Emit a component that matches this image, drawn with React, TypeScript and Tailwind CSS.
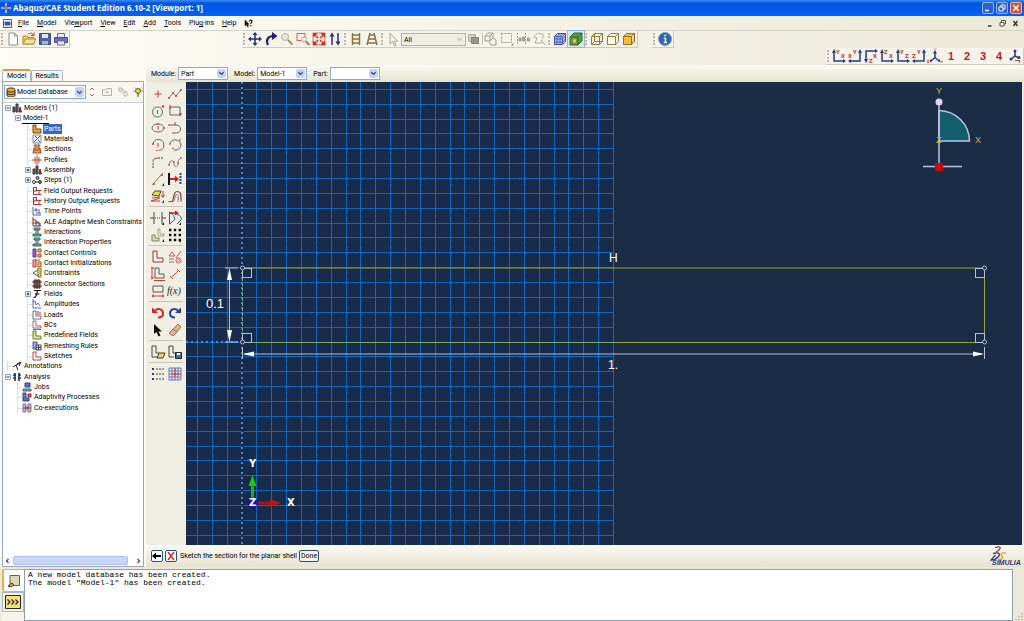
import { clsx } from "clsx";
import type { ReactNode } from "react";

const NAVY = "#27307a";
const RED = "#c4302b";

interface IconProps {
  children: ReactNode;
  box?: number;
  className?: string;
}

function Icon({ children, box = 16, className = "size-4" }: IconProps) {
  return (
    <svg
      viewBox={`0 0 ${box} ${box}`}
      className={clsx("shrink-0", className)}
      fill="none"
      stroke="#333"
      aria-hidden="true"
    >
      {children}
    </svg>
  );
}

interface ToolProps {
  label: string;
  children: ReactNode;
  active?: boolean;
}

function Tool({ label, children, active }: ToolProps) {
  return (
    <button
      type="button"
      aria-label={label}
      title={label}
      className={clsx(
        "flex h-4 w-4 items-center justify-center",
        active && "bg-[#dfe6ee] outline outline-[#9db4cf]",
      )}
    >
      <Icon>{children}</Icon>
    </button>
  );
}

function Handle() {
  return (
    <span className="mx-px h-3 w-[3px] border-l-2 border-dotted border-[#bdb9a6]" />
  );
}

function Bar({ children }: { children: ReactNode }) {
  return (
    <div className="flex h-[17px] items-center border-r border-b border-[#cfccbc] bg-[#f5f3ea]">
      {children}
    </div>
  );
}

function Chevron({ disabled }: { disabled?: boolean }) {
  return (
    <span
      className={clsx(
        "pointer-events-none flex h-full w-[9px] shrink-0 items-center justify-center",
        !disabled && "rounded-xs bg-[#c3d3fb]",
      )}
    >
      <Icon box={8} className="size-[7px]">
        <path
          d="M1.5 2.5 4 5l2.500-2.500"
          stroke={disabled ? "#c4c2b6" : "#3a4f80"}
          strokeWidth="1.600"
        />
      </Icon>
    </span>
  );
}

interface ComboProps {
  id: string;
  label: string;
  value: string;
  className: string;
}

function Combo({ id, label, value, className }: ComboProps) {
  return (
    <div className="flex items-center gap-[2px]">
      <label htmlFor={id}>{label}</label>
      <div
        className={clsx(
          "flex h-[13px] items-center border border-[#8fa8c6] bg-white p-px",
          className,
        )}
      >
        <select id={id} className="h-full min-w-0 flex-1 appearance-none pl-px">
          <option>{value}</option>
        </select>
        <Chevron />
      </div>
    </div>
  );
}

/* ---------- title and menus ---------- */

function TitleBar() {
  return (
    <header className="flex h-4 items-center bg-linear-to-b from-[#3a8cf8] via-[#0054e0] via-20% to-[#0062fb] pr-[2px] pl-px text-white">
      <Icon box={10} className="size-[10px]">
        <path d="M5 0v10M0 5h10" stroke="#f0d8dc" strokeWidth="1.500" />
        <path d="M5 2.500v5M2.500 5h5" stroke="#d04048" />
      </Icon>
      <h1 className="ml-[2px] font-['Open_Sans',sans-serif] text-[8px] font-bold">
        Abaqus/CAE Student Edition 6.10-2 [Viewport: 1]
      </h1>
      <div className="ml-auto flex gap-[2px]">
        <button
          type="button"
          aria-label="Minimize"
          className="size-3 rounded-xs border border-[#9cb8f2] bg-[#2c5fdc]"
        >
          <Icon box={10} className="size-[10px]">
            <path d="M2 7.500h4" stroke="#fff" strokeWidth="1.500" />
          </Icon>
        </button>
        <button
          type="button"
          aria-label="Restore"
          className="size-3 rounded-xs border border-[#9cb8f2] bg-[#2c5fdc]"
        >
          <Icon box={10} className="size-[10px]">
            <path d="M4 4V2h4v4H6M2 4h4v4H2z" stroke="#fff" />
          </Icon>
        </button>
        <button
          type="button"
          aria-label="Close"
          className="size-3 rounded-xs border border-[#f0b8a8] bg-[#dd4a25]"
        >
          <Icon box={10} className="size-[10px]">
            <path d="m2 2 6 6M8 2 2 8" stroke="#fff" strokeWidth="1.600" />
          </Icon>
        </button>
      </div>
    </header>
  );
}

// [before, mnemonic, after]
const MENUS = [
  ["", "F", "ile"],
  ["", "M", "odel"],
  ["Vie", "w", "port"],
  ["", "V", "iew"],
  ["", "E", "dit"],
  ["", "A", "dd"],
  ["", "T", "ools"],
  ["Plu", "g", "-ins"],
  ["", "H", "elp"],
];

function MenuBar() {
  return (
    <nav className="flex h-[15px] items-center border-b border-[#d5d2c2] bg-linear-to-r from-[#fdfcf6] to-[#ece9d8] pr-1 pl-[3px]">
      <Icon box={9} className="mr-[6px] size-[9px]">
        <path d="M.5.5h8v8h-8z" fill="#fff" stroke="#2a57c8" />
        <path d="M2 3h5v3H2z" fill="#2a57c8" stroke="#2a57c8" />
      </Icon>
      <div className="flex items-center gap-2">
        {MENUS.map(([before, key, after]) => (
          <button type="button" key={before + key + after}>
            {before}
            <span className="underline">{key}</span>
            {after}
          </button>
        ))}
        <button type="button" aria-label="Context help">
          <Icon box={9} className="size-[9px]">
            <path d="M1 1v6l1.500-1.500L3.500 8l1-.5-1-2.200H5z" fill="#111" stroke="#111" strokeWidth=".5" />
            <path d="M5.500 2.500C5.500.5 8.300.8 8 2.500 7.800 3.500 6.800 3.500 6.800 5M6.800 6v1.200" stroke="#111" strokeWidth="1.200" />
          </Icon>
        </button>
      </div>
      <div className="ml-auto flex gap-1">
        <button type="button" aria-label="Minimize viewport">
          <Icon box={9} className="size-[9px]">
            <path d="M3 7h3.500" strokeWidth="1.400" />
          </Icon>
        </button>
        <button type="button" aria-label="Restore viewport">
          <Icon box={9} className="size-[9px]">
            <path d="M3.500 3.500v-2h4v3.500h-1.500M2 3.500h4v3.500H2z" stroke="#555" />
          </Icon>
        </button>
        <button type="button" aria-label="Close viewport">
          <Icon box={9} className="size-[9px]">
            <path d="m2.500 2 4 5M6.500 2l-4 5" strokeWidth="1.400" />
          </Icon>
        </button>
      </div>
    </nav>
  );
}

/* ---------- toolbars ---------- */

function Cube({ fill, line, hidden }: { fill: string; line: string; hidden?: boolean }) {
  return (
    <g stroke={line} fill={fill} strokeLinejoin="round">
      <path d="M2.500 5.500h8v8h-8zM2.500 5.500l3-3h8l-3 3M10.500 13.500l3-3v-8" />
      {hidden && <path d="M5.500 2.500v8h8M5.500 10.500l-3 3" fill="none" />}
    </g>
  );
}

function MainToolbars() {
  return (
    <div className="flex h-[17px] items-center bg-linear-to-r from-[#fdfcf6] to-[#ece9d8]">
      <Bar>
        <Handle />
        <Tool label="New model database">
          <path d="M4 2h5.500L12.500 5v9H4z" fill="#fff" stroke="#8c8c94" />
          <path d="M9.500 2v3h3" stroke="#8c8c94" />
        </Tool>
        <Tool label="Open">
          <path d="M2 13V5h4l1 1.500h6V13z" fill="#f3cf6a" stroke="#b28a30" />
          <path d="m2 13 2.500-5H15l-2.500 5z" fill="#fbe29a" stroke="#b28a30" />
          <path d="M7 3.500c2-2 4-1.500 5.500.5M13 1.500V4.500h-3" stroke={RED} />
        </Tool>
        <Tool label="Save">
          <path d="M2.500 2.500h11v11h-11z" fill="#5064a0" stroke="#3c4a80" />
          <path d="M5 3h6v4H5z" fill="#dfe6f4" stroke="none" />
          <path d="M5 10h6v3.500H5z" fill="#a9b4c8" stroke="none" />
        </Tool>
        <Tool label="Print">
          <path d="M4.500 2.500h7v4h-7z" fill="#e8e8f4" stroke="#6a6a9c" />
          <path d="M1.500 6.500h13v5h-13z" fill="#6b6fb0" stroke="#4b4f90" />
          <path d="M4.500 10h7v4h-7z" fill="#e8e8f4" stroke="#6a6a9c" />
        </Tool>
      </Bar>

      <div className="ml-[172px] flex">
        <Bar>
          <Handle />
          <Tool label="Pan">
            <path d="M8 2.500v11M2.500 8h11" stroke={NAVY} strokeWidth="1.500" />
            <path d="m8 1-2.500 3h5zM8 15l-2.500-3h5zM1 8l3-2.500v5zM15 8l-3-2.500v5z" fill={NAVY} stroke="none" />
          </Tool>
          <Tool label="Rotate">
            <path d="M5 14C2.500 9 5 5 10.500 5" stroke="#241c7c" strokeWidth="2.200" />
            <path d="m9 1 5.500 4L9 9z" fill="#241c7c" stroke="none" />
          </Tool>
          <Tool label="Magnify">
            <circle cx="6" cy="6" r="3.500" fill="#e7e7e2" stroke="#b3b0a4" />
            <path d="m9 9 4.500 4.500" stroke="#a89058" strokeWidth="2" />
          </Tool>
          <Tool label="Box zoom">
            <path d="M2 2.500h8v7H2z" stroke="#d65a50" />
            <circle cx="9" cy="8.500" r="2.500" fill="#eee" stroke="#aaa" />
            <path d="m11 10.500 3.500 3.500" stroke="#a08048" strokeWidth="2" />
          </Tool>
          <Tool label="Auto-fit">
            <path d="M2 2h12v12H2z" fill="#fbe0d4" stroke="#e8705c" />
            <path d="m7 7-3.500-3.500M9 7l3.500-3.500M7 9l-3.500 3.500M9 9l3.500 3.500" stroke="#c92b20" strokeWidth="1.200" />
            <path d="M2 2h4.500L2 6.500zM14 2v4.500L9.500 2zM14 14H9.500L14 9.500zM2 14V9.500L6.500 14z" fill="#c92b20" stroke="none" />
          </Tool>
          <Tool label="Cycle views">
            <path d="M5 4v10M11 2v10" stroke={NAVY} strokeWidth="1.500" />
            <path d="M5 1.500 2.500 5.500h5zM11 14.500l-2.500-4h5z" fill={NAVY} stroke="none" />
          </Tool>
          <Handle />
          <Tool label="Parallel view">
            <path d="M4.500 2v12M11.500 2v12M4.500 4h7M4.500 8h7M4.500 12h7" stroke="#8c7440" strokeWidth="1.500" />
          </Tool>
          <Tool label="Perspective view">
            <path d="M6 2 3 14M10 2l3 12M5.500 4h5M4.500 8h7M3.500 12h9" stroke="#8c7440" strokeWidth="1.500" />
          </Tool>
          <Handle />
          <Tool label="Select">
            <path d="M5 2v11l2.500-2.500L9.500 15l1.500-.8-2-4h3.500z" stroke="#aaa89e" />
          </Tool>
          <div className="flex h-[13px] w-[65px] items-center border border-[#9fb4cc] bg-[#efeee6] p-px">
            <select aria-label="Selection filter" className="h-full min-w-0 flex-1 appearance-none pl-px">
              <option>All</option>
            </select>
            <Chevron disabled />
          </div>
          <Tool label="Highlight">
            <path d="M2.500 3.500h7v7h-7z" fill="#d0cec4" stroke="#aeaca2" />
            <path d="M5.500 6.500h7v6h-7z" fill="#98968e" stroke="#858379" />
          </Tool>
          <span className="h-3 w-px bg-[#c3c0b0]" />
          <Tool label="Select entities">
            <path d="m2 5 3-3h5v5l-3 3H2zM2 5h5v5M7 5l3-3M6 11l2 3h5V9l-3-2" stroke="#9c9a92" />
          </Tool>
          <Tool label="Drag shape">
            <path d="M2.500 2.500h10v9h-10z" stroke="#9c9a92" strokeDasharray="2 1" />
            <path d="m14.500 12-2.500 2.500h2.500z" fill="#888" stroke="none" />
          </Tool>
          <Tool label="Drag scope">
            <path d="M2.500 2v12M10.500 2v12" stroke="#9c9a92" strokeDasharray="2 1" />
            <path d="M4 7h2v3H4zM7.500 6h2v4h-2zM12.500 7h2v3h-2z" fill="#b4b2a8" stroke="#9c9a92" />
          </Tool>
          <Tool label="Reselect">
            <path d="M3 6c0-4 9-5 10-.5L11 7M3 6l3 1-2 5h6c2 0 2-3 0-3l4 5" stroke="#b0aea4" />
          </Tool>
          <Handle />
          <Tool label="Mesh display">
            <path d="m2.500 5.500 3-3h8v8l-3 3h-8z" fill="#b9c2ea" stroke="#3e4da8" />
            <path d="M2.500 5.500h8v8M10.500 5.500l3-3M2.500 8h8l3-3M2.500 11h8l3-3M5 13.500v-8l3-3M8 13.500v-8l3-3" stroke="#3e4da8" strokeWidth=".8" />
          </Tool>
          <Tool label="Shaded display" active>
            <path d="m2 6 4-4h8v8l-4 4H2z" fill="#4fa04a" stroke="#2b6a35" />
            <path d="M2 6h8v8M10 6l4-4" stroke="#2b6a35" />
            <path d="M4.500 8h4v4h-4z" fill="#d8d058" stroke="#a08c20" />
          </Tool>
          <Handle />
          <Tool label="Wireframe">
            <Cube fill="none" line="#9a7c30" hidden />
          </Tool>
          <Tool label="Hidden line">
            <Cube fill="#fdfaf0" line="#9a7c30" />
          </Tool>
          <Tool label="Shaded">
            <Cube fill="#f6bd3a" line="#9a6c18" />
          </Tool>
        </Bar>
      </div>

      <div className="ml-[14px]">
        <Bar>
          <Handle />
          <Tool label="Query information">
            <circle cx="8" cy="8" r="6.500" fill="#2d66ae" stroke="#7c9cc8" />
            <path d="M8.500 7v4.500M6.800 7.200h1.700M6.800 11.500h3.200" stroke="#fff" strokeWidth="1.400" />
            <circle cx="8.300" cy="4.500" r="1" fill="#fff" stroke="none" />
          </Tool>
        </Bar>
      </div>
    </div>
  );
}

interface AxesProps {
  v: string;
  h: string;
  flip?: "left" | "down";
}

// Two-arrow view icon with the letters of the axes that it shows
function Axes({ v, h, flip }: AxesProps) {
  const shape =
    flip === "left"
      ? "M13 4v9H3"
      : flip === "down"
        ? "M3 12V3h9"
        : "M3 4v9h10";
  const heads =
    flip === "left"
      ? "m13 1-2 4h4zM1 13l3-2v4z"
      : flip === "down"
        ? "m3 15-2-4h4zM15 3l-3-2v4z"
        : "M3 1 1 5h4zM15 13l-3-2v4z";
  const vPos = flip === "left" ? [6, 6] : flip === "down" ? [6, 15] : [5, 6];
  const hPos = flip === "left" ? [1, 10] : [10, 10];
  return (
    <>
      <path d={shape} stroke="#1f3f8c" strokeWidth="1.500" />
      <path d={heads} fill="#1f3f8c" stroke="none" />
      <g fill={RED} stroke="none" fontSize="6" fontWeight="bold">
        <text x={vPos[0]} y={vPos[1]}>{v}</text>
        <text x={hPos[0]} y={hPos[1]}>{h}</text>
      </g>
    </>
  );
}

function ViewToolbar() {
  return (
    <div className="flex h-[17px] justify-end bg-linear-to-r from-[#fdfcf6] to-[#ece9d8]">
      <Bar>
        <Handle />
        <Tool label="Front view"><Axes v="Y" h="X" /></Tool>
        <Tool label="Back view"><Axes v="Y" h="X" flip="left" /></Tool>
        <Tool label="Top view"><Axes v="Z" h="X" flip="down" /></Tool>
        <Tool label="Bottom view"><Axes v="Z" h="X" /></Tool>
        <Tool label="Left view"><Axes v="Y" h="Z" /></Tool>
        <Tool label="Right view"><Axes v="Y" h="Z" flip="left" /></Tool>
        <Tool label="Isometric view">
          <path d="M8 4v5.500L4 13M8 9.500l4 3.500" stroke="#1f3f8c" strokeWidth="1.500" />
          <path d="M8 2 6 5.500h4zM2.500 14.500l1-3.500 2 2zM13.500 14.500l-1-3.500-2 2z" fill="#1f3f8c" stroke="none" />
          <path d="m7 .5 1 1 1-1M0 12.500h2l-2 2h2M14 12.500l2 2m0-2-2 2" stroke={RED} strokeWidth=".8" />
        </Tool>
        {[1, 2, 3, 4].map((n) => (
          <button
            type="button"
            key={n}
            aria-label={`User view ${n}`}
            className="w-4 font-['Liberation_Sans',sans-serif] text-[11px] leading-4 font-bold text-[#c01c1c]"
          >
            {n}
          </button>
        ))}
        <Tool label="Save view">
          <path d="M8 3v5L4 11M8 8l4 2" stroke="#1f3f8c" strokeWidth="1.500" />
          <circle cx="8" cy="3" r="1.500" fill="#1f3f8c" stroke="none" />
          <circle cx="4" cy="11" r="1.500" fill="#1f3f8c" stroke="none" />
          <circle cx="12" cy="9.500" r="1.500" fill="#1f3f8c" stroke="none" />
          <path d="M8 12.500h4l1 2" stroke={RED} strokeWidth="1.200" />
        </Tool>
      </Bar>
    </div>
  );
}

/* ---------- model tree ---------- */

const TREE_ICONS: Record<string, ReactNode> = {
  models: (
    <>
      <path d="M1 9V4h2v5zM4 9V1h2v8z" fill="#667" stroke="#333" />
      <path d="m7 9 1-5 1.500 5z" fill="#b33" stroke="#722" />
    </>
  ),
  parts: <path d="M1 1h3v4h5v4H1z" fill="#e8a62c" stroke="#6c4710" />,
  materials: (
    <>
      <path d="M1 1h8v8H1z" fill="#eef2fc" stroke="#7c88b4" />
      <path d="m2 8 6-6M3 2l2 2M6 6l2 2" stroke="#3b55a8" />
    </>
  ),
  sections: (
    <>
      <path d="M2 1h6L6 4h2l1 5H1l1-5h2z" fill="#e2a35c" stroke="#9c4c20" />
      <path d="M2 6h6" stroke={RED} />
    </>
  ),
  profiles: <path d="M5 0v10M0 5h10M3 2v6M7 2v6" stroke="#c0482c" />,
  steps: (
    <>
      <circle cx="2" cy="7" r="1.500" />
      <circle cx="5.500" cy="3" r="1.500" fill="#8a8" />
      <circle cx="8" cy="7" r="1.500" fill="#5a5" />
      <path d="M3 7h4" />
    </>
  ),
  output: (
    <>
      <path d="M1.500 9V1.500h3V5h-3" stroke="#734" />
      <path d="M4.500 4.500h5M1 8.500h8.500M7 4.500v4" stroke={RED} />
    </>
  ),
  time: <path d="M1 1v8h8M3 3h2v2H3zM7 3v4M4 7h5" stroke="#4a5cae" />,
  ale: <path d="M1 0v9h8M1 3h3v6M4 5h3v4M1 6h6M8 6v3" stroke="#7a3340" />,
  interact: (
    <>
      <path d="M2 1h6v2H2zM1 7h8v2H1z" fill="#5bb8a8" stroke="#2c6e66" />
      <path d="M4 3v4M6 3v4" stroke="#8a2c2c" />
    </>
  ),
  contact: (
    <>
      <path d="M1 1h3v8H1z" fill="#9a60b8" stroke="#5b3880" />
      <path d="M6 1h3v3H6zM6 6h3v3H6z" fill="#e8b040" stroke="#b0502c" />
    </>
  ),
  init: (
    <>
      <path d="M1 2h3v7H1z" fill="#f0a890" stroke="#b0402c" />
      <path d="M4 2h4M6 4h3v5H6z" fill="#f4c860" stroke="#b0502c" />
    </>
  ),
  constraints: (
    <>
      <path d="M6 0h3v9H6z" fill="#d9cf6a" stroke="#7a7430" />
      <path d="M6 2 1 5l5 3" stroke="#3c6c58" />
    </>
  ),
  connector: (
    <>
      <path d="M2 1h6v8H2z" fill="#8a5c50" stroke="#44302c" />
      <path d="M0 3h10M0 7h10M5 1v8" stroke="#44302c" />
    </>
  ),
  fields: <path d="M2 1.500h7M5.500 1.500C5 5 4 9 1.500 8.500M3 5h4.500" stroke="#111" strokeWidth="1.200" />,
  amplitudes: <path d="M1 0v9h8M1 3l2-1 1 4 2-2 2 3" stroke="#5a68b0" />,
  loads: (
    <>
      <path d="M1 1v8h8V6H4V1z" stroke="#68687c" />
      <path d="M6 1v4M8 2v3" stroke={RED} />
    </>
  ),
  bcs: <path d="M1 1v7h8V6H4V1zM1 9.500h8" stroke="#a06070" />,
  predefined: <path d="M1 1v8h8V6H4V1z" fill="#e6e68a" stroke="#6a7a30" />,
  remesh: (
    <>
      <path d="M1 1h4v7H1z" fill="#9caad8" stroke="#4c5690" />
      <path d="M4 4h5v5H4zM4 6.500h5M6.500 4v5" fill="#ddd" stroke="#445" />
    </>
  ),
  sketches: <path d="M1 1v8h8V6H4V1z" fill="#fff" stroke="#b8423a" />,
  annotations: <path d="m1 6 3-2 2 5M5 3l4-2-2 4M4 4l4-2" stroke="#222" />,
  analysis: <path d="M3 1v8M7 1v8M1 3h3M6 3h3M1 6h3M6 6h3" stroke="#223c78" strokeWidth="1.700" />,
  jobs: (
    <>
      <path d="M3 1h5v4H3z" fill="#4c74d0" stroke="#2c4484" />
      <path d="M1 7h8v2H1z" fill="#9aa4b8" stroke="#4c5670" />
    </>
  ),
  adaptivity: (
    <>
      <path d="M1 1h3v5h3v3H1z" fill="#5876c0" stroke="#304880" />
      <path d="M6 2h3v3H6z" fill="#d05848" stroke="#903028" />
    </>
  ),
  coexec: (
    <>
      <path d="M1 1h3v8H1zM6 1h3v8H6z" fill="#b4bad0" stroke="#7a82a0" />
      <path d="M1 5h8M3 3l4 4M7 3 3 7" stroke="#b03c3c" />
    </>
  ),
};

interface TreeNode {
  label: string;
  depth: 0 | 1 | 2;
  icon?: string;
  toggle?: "+" | "-";
}

const TREE: TreeNode[] = [
  { label: "Models (1)", depth: 0, icon: "models", toggle: "-" },
  { label: "Model-1", depth: 1, toggle: "-" },
  { label: "Parts", depth: 2, icon: "parts" },
  { label: "Materials", depth: 2, icon: "materials" },
  { label: "Sections", depth: 2, icon: "sections" },
  { label: "Profiles", depth: 2, icon: "profiles" },
  { label: "Assembly", depth: 2, icon: "models", toggle: "+" },
  { label: "Steps (1)", depth: 2, icon: "steps", toggle: "+" },
  { label: "Field Output Requests", depth: 2, icon: "output" },
  { label: "History Output Requests", depth: 2, icon: "output" },
  { label: "Time Points", depth: 2, icon: "time" },
  { label: "ALE Adaptive Mesh Constraints", depth: 2, icon: "ale" },
  { label: "Interactions", depth: 2, icon: "interact" },
  { label: "Interaction Properties", depth: 2, icon: "interact" },
  { label: "Contact Controls", depth: 2, icon: "contact" },
  { label: "Contact Initializations", depth: 2, icon: "init" },
  { label: "Constraints", depth: 2, icon: "constraints" },
  { label: "Connector Sections", depth: 2, icon: "connector" },
  { label: "Fields", depth: 2, icon: "fields", toggle: "+" },
  { label: "Amplitudes", depth: 2, icon: "amplitudes" },
  { label: "Loads", depth: 2, icon: "loads" },
  { label: "BCs", depth: 2, icon: "bcs" },
  { label: "Predefined Fields", depth: 2, icon: "predefined" },
  { label: "Remeshing Rules", depth: 2, icon: "remesh" },
  { label: "Sketches", depth: 2, icon: "sketches" },
  { label: "Annotations", depth: 0, icon: "annotations" },
  { label: "Analysis", depth: 0, icon: "analysis", toggle: "-" },
  { label: "Jobs", depth: 1, icon: "jobs" },
  { label: "Adaptivity Processes", depth: 1, icon: "adaptivity" },
  { label: "Co-executions", depth: 1, icon: "coexec" },
];

const INDENT = ["pl-0", "pl-[10px]", "pl-5"];

function TreeRow({ node }: { node: TreeNode }) {
  const selected = node.label === "Parts";
  return (
    <li className={clsx("flex h-[10px] items-center", INDENT[node.depth])}>
      <Icon box={8} className="h-[10px] w-2">
        {node.toggle ? (
          <>
            <path d="M1.500 1.500h5v5h-5z" fill="#fff" stroke="#8ba0b8" />
            <path d={node.toggle === "+" ? "M2.500 4h3M4 2.500v3" : "M2.500 4h3"} />
          </>
        ) : (
          <path d="M3.500-1v10M4 4.500h4" stroke="#dcdcdc" />
        )}
      </Icon>
      {node.icon && (
        <Icon box={10} className="mr-px size-[10px]">
          {TREE_ICONS[node.icon]}
        </Icon>
      )}
      <span
        className={clsx(
          "px-px leading-[10px] whitespace-nowrap",
          selected && "bg-[#316ac5] text-white",
          node.label === "Model-1" && "border-b border-black",
        )}
      >
        {node.label}
      </span>
    </li>
  );
}

function ModelPanel() {
  return (
    <aside className="flex w-[146px] shrink-0 flex-col bg-[#fbfaf4] pt-1 pr-[2px] pl-[2px]">
      <div className="flex items-end" role="tablist">
        <button
          type="button"
          role="tab"
          aria-selected="true"
          className="h-3 rounded-t-xs border border-t-2 border-b-0 border-[#a9b7c0] border-t-[#e8973a] bg-white px-1"
        >
          Model
        </button>
        <button
          type="button"
          role="tab"
          aria-selected="false"
          className="h-[11px] rounded-t-xs border border-b-0 border-[#a9b7c0] bg-[#f8f6ee] px-[3px]"
        >
          Results
        </button>
      </div>
      <div className="flex flex-1 flex-col border border-[#98a9b8] bg-white">
        <div className="flex h-5 items-center bg-[#f8f6ee] pl-px">
          <div className="flex h-[14px] w-[82px] items-center border border-[#8fa8c6] bg-white p-px">
            <Icon box={10} className="size-[10px]">
              <path d="M1 2.500c0-2 8-2 8 0v6c0 2-8 2-8 0z" fill="#e2ae38" stroke="#3a2c10" />
              <path d="M1 4c2 1.500 6 1.500 8 0M1 6.500c2 1.500 6 1.500 8 0" stroke="#3a2c10" />
            </Icon>
            <select aria-label="Tree source" className="h-full min-w-0 flex-1 appearance-none pl-px">
              <option>Model Database</option>
            </select>
            <Chevron />
          </div>
          <div className="flex flex-1 justify-between pl-px">
            <button type="button" aria-label="Move up or down">
              <Icon box={10} className="size-[10px]">
                <path d="m3 3 2-2 2 2M3 7l2 2 2-2" stroke="#98685c" />
              </Icon>
            </button>
            <button type="button" aria-label="Parent container">
              <Icon box={10} className="size-[10px]">
                <path d="M.5 2.500h3l1-1h5v7h-9zM5 7V4M3.500 5.500 5 4l1.500 1.500" stroke="#b4b4ae" />
              </Icon>
            </button>
            <button type="button" aria-label="Filter">
              <Icon box={10} className="size-[10px]">
                <path d="M1 1h3v3H1zM3.500 4l2 2M6 5h3v4H6zM4 2l4 3" stroke="#b4b4ae" />
              </Icon>
            </button>
            <button type="button" aria-label="Tips">
              <Icon box={10} className="size-[10px]">
                <path d="M0 4h1.500M8.500 4H10M1.500.5l1 1M8.500.5l-1 1" stroke="#998c28" />
                <circle cx="5" cy="4" r="2.500" fill="#d9dc48" stroke="#5a6020" />
                <path d="M4 8h2M4.500 9.500h1" stroke="#333" />
              </Icon>
            </button>
          </div>
        </div>
        <ul className="flex-1 border-t border-[#c4ced6] pl-px [&>li:nth-child(3n)]:mt-px">
          {TREE.map((node, i) => (
            <TreeRow key={i} node={node} />
          ))}
        </ul>
        <div className="flex h-[11px] items-center justify-between">
          <Icon box={10} className="size-[10px]">
            <path d="M5.500 3 3.500 5l2 2" stroke="#3a4f80" strokeWidth="1.300" />
          </Icon>
          <span className="mr-[5px] h-[9px] flex-1 rounded-xs border border-[#aac0f4] bg-[#c6d6fc]" />
          <Icon box={10} className="size-[10px]">
            <path d="m4.500 3 2 2-2 2" stroke="#3a4f80" strokeWidth="1.300" />
          </Icon>
        </div>
      </div>
    </aside>
  );
}

/* ---------- sketcher toolbox ---------- */

const L_SHAPE = "M3 2h4v7h6v4H3z";
const MORE = <path d="M14 12v3h-2z" fill="#222" stroke="none" />;

const TOOL_GROUPS: { label: string; art: ReactNode }[][] = [
  [
    { label: "Create isolated point", art: <path d="M8 4.500v7M4.500 8h7" stroke="#d0362e" /> },
    {
      label: "Create connected lines",
      art: (
        <>
          <path d="m2 12 4-5 3 3 5-6" stroke="#777" />
          <path d="M1 12h2M5 7h2M8 10h2M13 4h2M2 11v2M6 6v2M9 9v2M14 3v2" stroke="#c8382f" />
        </>
      ),
    },
    {
      label: "Create circle",
      art: (
        <>
          <circle cx="7.500" cy="9" r="5" stroke="#666" />
          <path d="M7.500 7v4M13 2v3M11.500 3.500h3" stroke="#c8382f" />
        </>
      ),
    },
    {
      label: "Create rectangle",
      art: (
        <>
          <path d="M3 4h10v8H3z" stroke="#666" />
          <path d="M2 3h2M2 5h2M12 11h3M13.500 10v3" stroke="#c8382f" />
        </>
      ),
    },
    {
      label: "Create ellipse",
      art: (
        <>
          <ellipse cx="8" cy="8" rx="6" ry="4" stroke="#666" />
          <path d="M8 6v4M13 8h2M8 3v2" stroke="#c8382f" />
        </>
      ),
    },
    {
      label: "Create tangent arc",
      art: (
        <>
          <path d="M2 5h7c6 0 6 8 0 8H7" stroke="#666" />
          <path d="M8 2v3M2 4v2M6 12v2" stroke="#c8382f" />
        </>
      ),
    },
    {
      label: "Create center arc",
      art: (
        <>
          <path d="M3 7A5.500 5.500 0 1 1 9 13.500" stroke="#666" />
          <path d="M8 6v4M2 7h2M3 6v2M6 13.500h2" stroke="#c8382f" />
        </>
      ),
    },
    {
      label: "Create three-point arc",
      art: (
        <>
          <path d="M3 7c1-6 10-5 11 0 0 3-2 6-5 6" stroke="#666" />
          <path d="M2 7h2M12 3h2M8 12v2M5 11l2 1" stroke="#c8382f" />
        </>
      ),
    },
    {
      label: "Create fillet",
      art: (
        <>
          <path d="M3 14V8" stroke="#444" strokeDasharray="2 1" />
          <path d="M3 8c0-3 2-4 5-4" stroke="#c8382f" />
          <path d="M8 4h6" stroke="#444" strokeDasharray="2 1" />
        </>
      ),
    },
    {
      label: "Create spline",
      art: (
        <>
          <path d="M2 11c1-6 5-5 5-1s5 3 4-1c0-2 1-4 3-5" stroke="#777" />
          <path d="M1 11h2M7 7v2M10 9h2M13 4h2" stroke="#c8382f" />
        </>
      ),
    },
    {
      label: "Create construction line",
      art: (
        <>
          <path d="M2 14 13 2" stroke="#777" />
          <path d="M3 13h2M11 4h2M4 12v2M12 3v2" stroke="#c8382f" />
          {MORE}
        </>
      ),
    },
    {
      label: "Project edges",
      art: (
        <>
          <path d="M2 2v12" stroke="#111" strokeWidth="2" />
          <path d="M3 8h6" stroke="#d02020" strokeWidth="2" />
          <path d="m8 4.500 4 3.500-4 3.500z" fill="#d02020" stroke="none" />
          <path d="M13.500 2v12" stroke="#2c3c90" strokeDasharray="2 1" strokeWidth="2" />
        </>
      ),
    },
    {
      label: "Offset curves",
      art: (
        <>
          <path d="m2 7 3-4h6l-2 5z" fill="#eede4c" stroke="#4c4618" />
          <path d="m1 13 9-3M2 10l8-1M1 13h9" stroke="#c8382f" />
          <path d="M13 3v6m-1.500-2L13 9.500 14.500 7" stroke="#c8382f" />
          {MORE}
        </>
      ),
    },
    {
      label: "Offset",
      art: (
        <>
          <path d="M1.500 13.500h3c3 0 1-10 5.500-10s4 4 4 10" stroke="#8a3c38" strokeWidth="1.200" />
          <path d="M5 14c4 0 2-7.500 4.500-7.500S11 10 11 14" stroke="#8a6c68" />
        </>
      ),
    },
  ],
  [
    {
      label: "Auto-trim",
      art: (
        <>
          <path d="M4 2v12M12 2v12" stroke="#444" />
          <path d="M0 8h4M12 8h4" stroke="#444" />
          <path d="M5 8h6" stroke="#444" strokeDasharray="1 1" />
          {MORE}
        </>
      ),
    },
    {
      label: "Trim and extend",
      art: (
        <>
          <path d="M2.500 2v12l5-4c1-3-2-6-5-8M10 4c4 2 5 4 4 6l-4 4" stroke="#2c5a80" />
          <path d="M3 3h6" stroke="#d02020" strokeWidth="1.500" />
          <path d="m8 .5 4 2.500-4 2.500z" fill="#d02020" stroke="none" />
          {MORE}
        </>
      ),
    },
    {
      label: "Translate",
      art: (
        <>
          <path d="M2 8h3v3h4v3H2z" fill="#ddd8b8" stroke="#8a8458" />
          <path d="M8 2h2v5h4v2H8z" stroke="#a8a488" />
          {MORE}
        </>
      ),
    },
    {
      label: "Linear pattern",
      art: (
        <>
          <path d="M2 3h12M2 8h12M2 13h12" stroke="#111" strokeWidth="2.400" strokeDasharray="2.400 2.400" />
          {MORE}
        </>
      ),
    },
  ],
  [
    { label: "Auto-dimension", art: <path d={L_SHAPE} stroke="#8a3c38" /> },
    {
      label: "Add constraint",
      art: (
        <g stroke="#b5605a">
          <path d="m2 7 3-4 3 4zM9 9l5-7M2 10h5M2 13h5" />
          <circle cx="11.500" cy="11.500" r="2.500" />
          <circle cx="11.500" cy="11.500" r=".5" />
        </g>
      ),
    },
    {
      label: "Edit dimension",
      art: (
        <>
          <path d="M5 2h4v6h5v4H5z" stroke="#555" />
          <path d="M2 1v12M1 2h3M1 12h3M4 14.500h11" stroke="#c8382f" />
        </>
      ),
    },
    {
      label: "Add dimension",
      art: <path d="M4 12 12 4M3 10l3 3M10 3l3 3" stroke="#c0504a" />,
    },
    {
      label: "Dimension rectangle",
      art: (
        <>
          <path d="M3 3h10v6H3z" stroke="#555" />
          <path d="M2 13h12M4 11.500 2 13l2 1.500M12 11.500l2 1.500-2 1.500" stroke="#c8382f" />
        </>
      ),
    },
    {
      label: "Parameter manager",
      art: (
        <text
          x="0"
          y="11"
          fill="#222"
          stroke="none"
          fontSize="10"
          fontStyle="italic"
          fontFamily="Liberation Serif, serif"
        >
          f(x)
        </text>
      ),
    },
  ],
  [
    {
      label: "Undo",
      art: (
        <>
          <path d="M5 5.500c4-3 8-1 8 3s-4 4-5 4" stroke="#cc2a22" strokeWidth="2" />
          <path d="M2 8V2.500L8 8z" fill="#cc2a22" stroke="none" />
        </>
      ),
    },
    {
      label: "Redo",
      art: (
        <>
          <path d="M11 5.500c-4-3-8-1-8 3s4 4 5 4" stroke="#2b3c94" strokeWidth="2" />
          <path d="M14 8V2.500L8 8z" fill="#2b3c94" stroke="none" />
        </>
      ),
    },
    {
      label: "Select",
      art: <path d="M4 2v10l2.500-2 2 4.500 2-1-2-4H12z" fill="#111" stroke="none" />,
    },
    {
      label: "Delete",
      art: (
        <>
          <path d="m2 11 4-4 4 3-4 4z" fill="#e8a8a0" stroke="#a86860" />
          <path d="m6 7 5-5 3 3-4 5z" fill="#d8b878" stroke="#9c8458" />
        </>
      ),
    },
  ],
  [
    {
      label: "Add sketch",
      art: (
        <>
          <path d="M2 2h4v7h3M2 2v11h5" stroke="#444" />
          <path d="m7 14 2-5h6l-2 5z" fill="#e8d468" stroke="#444018" />
        </>
      ),
    },
    {
      label: "Save sketch as",
      art: (
        <>
          <path d="M2 2h4v7h3M2 2v11h5" stroke="#444" />
          <path d="M8.500 8.500h6v6h-6z" fill="#4c7080" stroke="#223" />
          <path d="M10 9h3v2h-3z" fill="#fff" stroke="none" />
        </>
      ),
    },
  ],
  [
    {
      label: "Sketcher options",
      art: (
        <>
          <path d="M2 3h2M2 8h2M2 13h2" stroke="#2c3c80" strokeWidth="2" />
          <path d="M6 3h8M6 8h8M6 13h8" stroke="#444" strokeDasharray="2 1" />
        </>
      ),
    },
    {
      label: "Grid options",
      art: (
        <>
          <path d="M2 2h12v12H2zM5 2v12M8 2v12M11 2v12M2 5h12M2 8h12M2 11h12" stroke="#6c74b8" />
          <path d="M8 2v6h6M5 8h3v3" stroke="#d03c48" />
        </>
      ),
    },
  ],
];

function Toolbox() {
  return (
    <div className="w-10 shrink-0 bg-[#f1efe4] px-[3px] pt-[3px]">
      {TOOL_GROUPS.map((group, i) => (
        <div key={i}>
          {i > 0 && <hr className="my-[2px] border-[#c9c6b5]" />}
          <div className="grid grid-cols-2">
            {group.map(({ label, art }) => (
              <button
                type="button"
                key={label}
                aria-label={label}
                title={label}
                className="flex h-[17px] items-center justify-center"
              >
                <Icon className="size-4">{art}</Icon>
              </button>
            ))}
          </div>
        </div>
      ))}
    </div>
  );
}

/* ---------- viewport ---------- */

const STEP = 14.86;
const ORIGIN = { x: 242, y: 342 };
const COLUMNS = Array.from({ length: 29 }, (_, i) => ORIGIN.x + (i - 3) * STEP);
const ROWS = Array.from({ length: 31 }, (_, i) => ORIGIN.y + (i - 17) * STEP);
const CORNERS = [
  { x: 242, y: 268, dx: 0, dy: 0 },
  { x: 984, y: 268, dx: -9, dy: 0 },
  { x: 242, y: 342, dx: 0, dy: -9 },
  { x: 984, y: 342, dx: -9, dy: -9 },
];

function Viewport() {
  return (
    <svg
      viewBox="186 82 836 463"
      className="min-w-0 flex-1 bg-[#1b2c47]"
      fill="none"
      role="img"
      aria-label="Sketch of the planar shell section"
    >
      <rect x="186" y="82" width="428" height="463" fill="#182b4b" />
      <g stroke="#1267be" shapeRendering="crispEdges">
        {COLUMNS.map((x) => (
          <path key={x} d={`M${x} 82V545`} />
        ))}
        {ROWS.map((y) => (
          <path key={y} d={`M186 ${y}H614`} />
        ))}
      </g>
      <path d="M242.500 82V545" stroke="#182b4b" strokeWidth="2" />
      <path d="M242 82V545M186 342H242" stroke="#4688d4" strokeWidth="2" strokeDasharray="2 3" />

      {/* Section outline */}
      <path d="M242 268h742.500v74.500H242" stroke="#93a82c" />
      <path d="M242.500 268v74M242 342.500h372" stroke="#6fb08c" strokeDasharray="3 2" />
      <g stroke="#b4c2d8">
        {CORNERS.map(({ x, y, dx, dy }) => (
          <g key={`${x}-${y}`}>
            <rect x={x + dx + 0.5} y={y + dy + 0.5} width="9" height="9" />
            <circle cx={x + 0.5} cy={y} r="2" fill="#1b2c47" />
          </g>
        ))}
      </g>

      {/* Dimensions */}
      <g stroke="#b4c2d8">
        <path d="M225 268h13M225 342h13M229.500 270v70" />
        <path d="M242.500 347v12M984.500 347v12M244 354h738" />
      </g>
      <g fill="#fff">
        <path d="m229.500 268-2.500 12h5zM229.500 342l-2.500-12h5zM243 354l11-2.500v5zM984 354l-11-2.500v5z" />
        <g fontFamily="Liberation Sans, sans-serif">
          <text x="206" y="308" fontSize="13">
            0.1
          </text>
          <text x="608" y="369" fontSize="12">
            1.
          </text>
          <text x="609" y="262" fontSize="12">
            H
          </text>
        </g>
      </g>

      {/* Triad */}
      <path d="M252.500 500v-16" stroke="#18b418" strokeWidth="3" />
      <path d="m252.500 475-4 11h8z" fill="#18c818" />
      <path d="M256 503h15" stroke="#b01010" strokeWidth="3" />
      <path d="m281 503-11-4v8z" fill="#c01414" />
      <circle cx="252.500" cy="502.500" r="5" fill="#1414b4" />
      <g fill="#fff" fontFamily="DejaVu Sans, sans-serif" fontSize="10" fontWeight="bold">
        <text x="249" y="467">Y</text>
        <text x="287" y="506">X</text>
        <text x="249" y="506">Z</text>
      </g>

      {/* View compass */}
      <path d="M939 110.500A31 31 0 0 1 969.500 141H939z" fill="#125c6c" stroke="#b4c8ee" strokeWidth="1.500" />
      <path d="M939 102v64M923 166.500h39" stroke="#c4c0ec" strokeWidth="1.500" />
      <circle cx="939" cy="102" r="3.500" fill="#e0d0fa" />
      <rect x="935" y="163" width="8" height="8" fill="#c80808" />
      <g fill="#c0b840" fontFamily="Liberation Sans, sans-serif" fontSize="9">
        <text x="936" y="94">Y</text>
        <text x="975" y="143">X</text>
        <text x="936" y="143">Z</text>
      </g>
    </svg>
  );
}

function Logo() {
  return (
    <svg viewBox="0 0 34 20" className="ml-auto h-5 w-[34px]" role="img" aria-label="Simulia">
      <g fill="none" strokeWidth="1.300">
        <path d="M6 1.500c3-1 6-1 5 1-.5 1.500-2 2.500-4 3.500" stroke="#c23030" />
        <path d="M4 7.500c6-1.500 8 0 5 3.500-1.500 1.800-4 3-7 3l4.500-5" stroke="#2c3c84" />
        <path d="M17 7c-4-.5-6 .5-4.500 2.500 1.500 1.500 2.500 4-3.500 4" stroke="#e0a030" />
      </g>
      <text
        x="3"
        y="19"
        fill="#2b3480"
        fontFamily="Liberation Sans, sans-serif"
        fontSize="7"
        fontStyle="italic"
        fontWeight="bold"
      >
        SIMULIA
      </text>
    </svg>
  );
}

function PromptArea() {
  return (
    <div className="flex h-[22px] items-center gap-[2px] bg-linear-to-b from-[#fbfaf4] to-[#e6e3d0] pr-px pl-[5px]">
      <button type="button" aria-label="Previous" className="size-3 rounded-xs border border-[#24507c] bg-white">
        <Icon box={10} className="size-[10px]">
          <path d="M3 5h6" stroke="#000" strokeWidth="2" />
          <path d="M0 5l4-3.500v7z" fill="#000" stroke="none" />
        </Icon>
      </button>
      <button type="button" aria-label="Cancel procedure" className="size-3 rounded-xs border border-[#24507c] bg-white">
        <Icon box={10} className="size-[10px]">
          <path d="m2 1 6 8M8 1 2 9" stroke="#e02020" strokeWidth="1.400" />
        </Icon>
      </button>
      <p className="ml-px">Sketch the section for the planar shell</p>
      <button type="button" className="h-3 rounded-xs border border-[#24507c] bg-[#f6f5ee] px-px leading-[10px]">
        Done
      </button>
      <Logo />
    </div>
  );
}

function MessageArea() {
  return (
    <footer className="flex h-[54px] bg-[#ece9d8] pt-[2px] pl-[2px]">
      <div className="flex w-[22px] flex-col bg-[#f6f4ea]" role="tablist">
        <button
          type="button"
          role="tab"
          aria-selected="true"
          aria-label="Message area"
          className="flex h-[23px] items-center justify-center rounded-l-xs border border-r-0 border-l-2 border-[#a9b7c0] border-l-[#e8b04a] bg-white"
        >
          <Icon box={14} className="size-[14px]">
            <path d="M3 1.500h9.500v10H3z" fill="#dcd8b0" stroke="#66624c" />
            <path d="m1 12 4-3 2 2-3 2z" fill="#d6b060" stroke="#4c3c18" />
          </Icon>
        </button>
        <button
          type="button"
          role="tab"
          aria-selected="false"
          aria-label="Command line"
          className="flex h-5 items-center justify-center border border-[#a9b7c0]"
        >
          <Icon box={16} className="size-4">
            <path d="M.5 1.500h15v13H.5z" fill="#f3e27a" stroke="#222" />
            <path d="m2.500 5.500 2.500 2.500-2.500 2.500M6.500 5.500 9 8l-2.500 2.500M10.500 5.500 13 8l-2.500 2.500" stroke="#222" strokeWidth="1.200" />
          </Icon>
        </button>
      </div>
      <div className="flex-1 border border-[#8f9fae] bg-white px-[3px] pt-px font-['Liberation_Mono',monospace] text-[8px] leading-2">
        <p>A new model database has been created.</p>
        <p>The model "Model-1" has been created.</p>
      </div>
      <div className="flex w-[11px] items-end justify-end">
        <Icon box={10} className="size-[10px]">
          <path d="M8 2v8M5 5v5M2 8v2" stroke="#b5b19c" strokeWidth="1.500" strokeDasharray="1.500 1.500" />
        </Icon>
      </div>
    </footer>
  );
}

export default function App() {
  return (
    <div className="flex min-h-screen flex-col bg-[#ece9d8] font-['Roboto',sans-serif] text-[7px] leading-[10px] text-black">
      <TitleBar />
      <MenuBar />
      <MainToolbars />
      <ViewToolbar />
      <main className="flex flex-1">
        <ModelPanel />
        <div className="flex min-w-0 flex-1 flex-col">
          <div className="flex h-[17px] items-center gap-[6px] bg-linear-to-b from-[#fbfaf4] to-[#e6e3d0] pl-[5px]">
            <Combo id="module" label="Module:" value="Part" className="w-[50px]" />
            <Combo id="model" label="Model:" value="Model-1" className="w-[50px]" />
            <Combo id="part" label="Part:" value="" className="w-[50px]" />
          </div>
          <div className="flex flex-1 border-r-2 border-[#ece9d8]">
            <Toolbox />
            <Viewport />
          </div>
          <PromptArea />
        </div>
      </main>
      <MessageArea />
    </div>
  );
}
